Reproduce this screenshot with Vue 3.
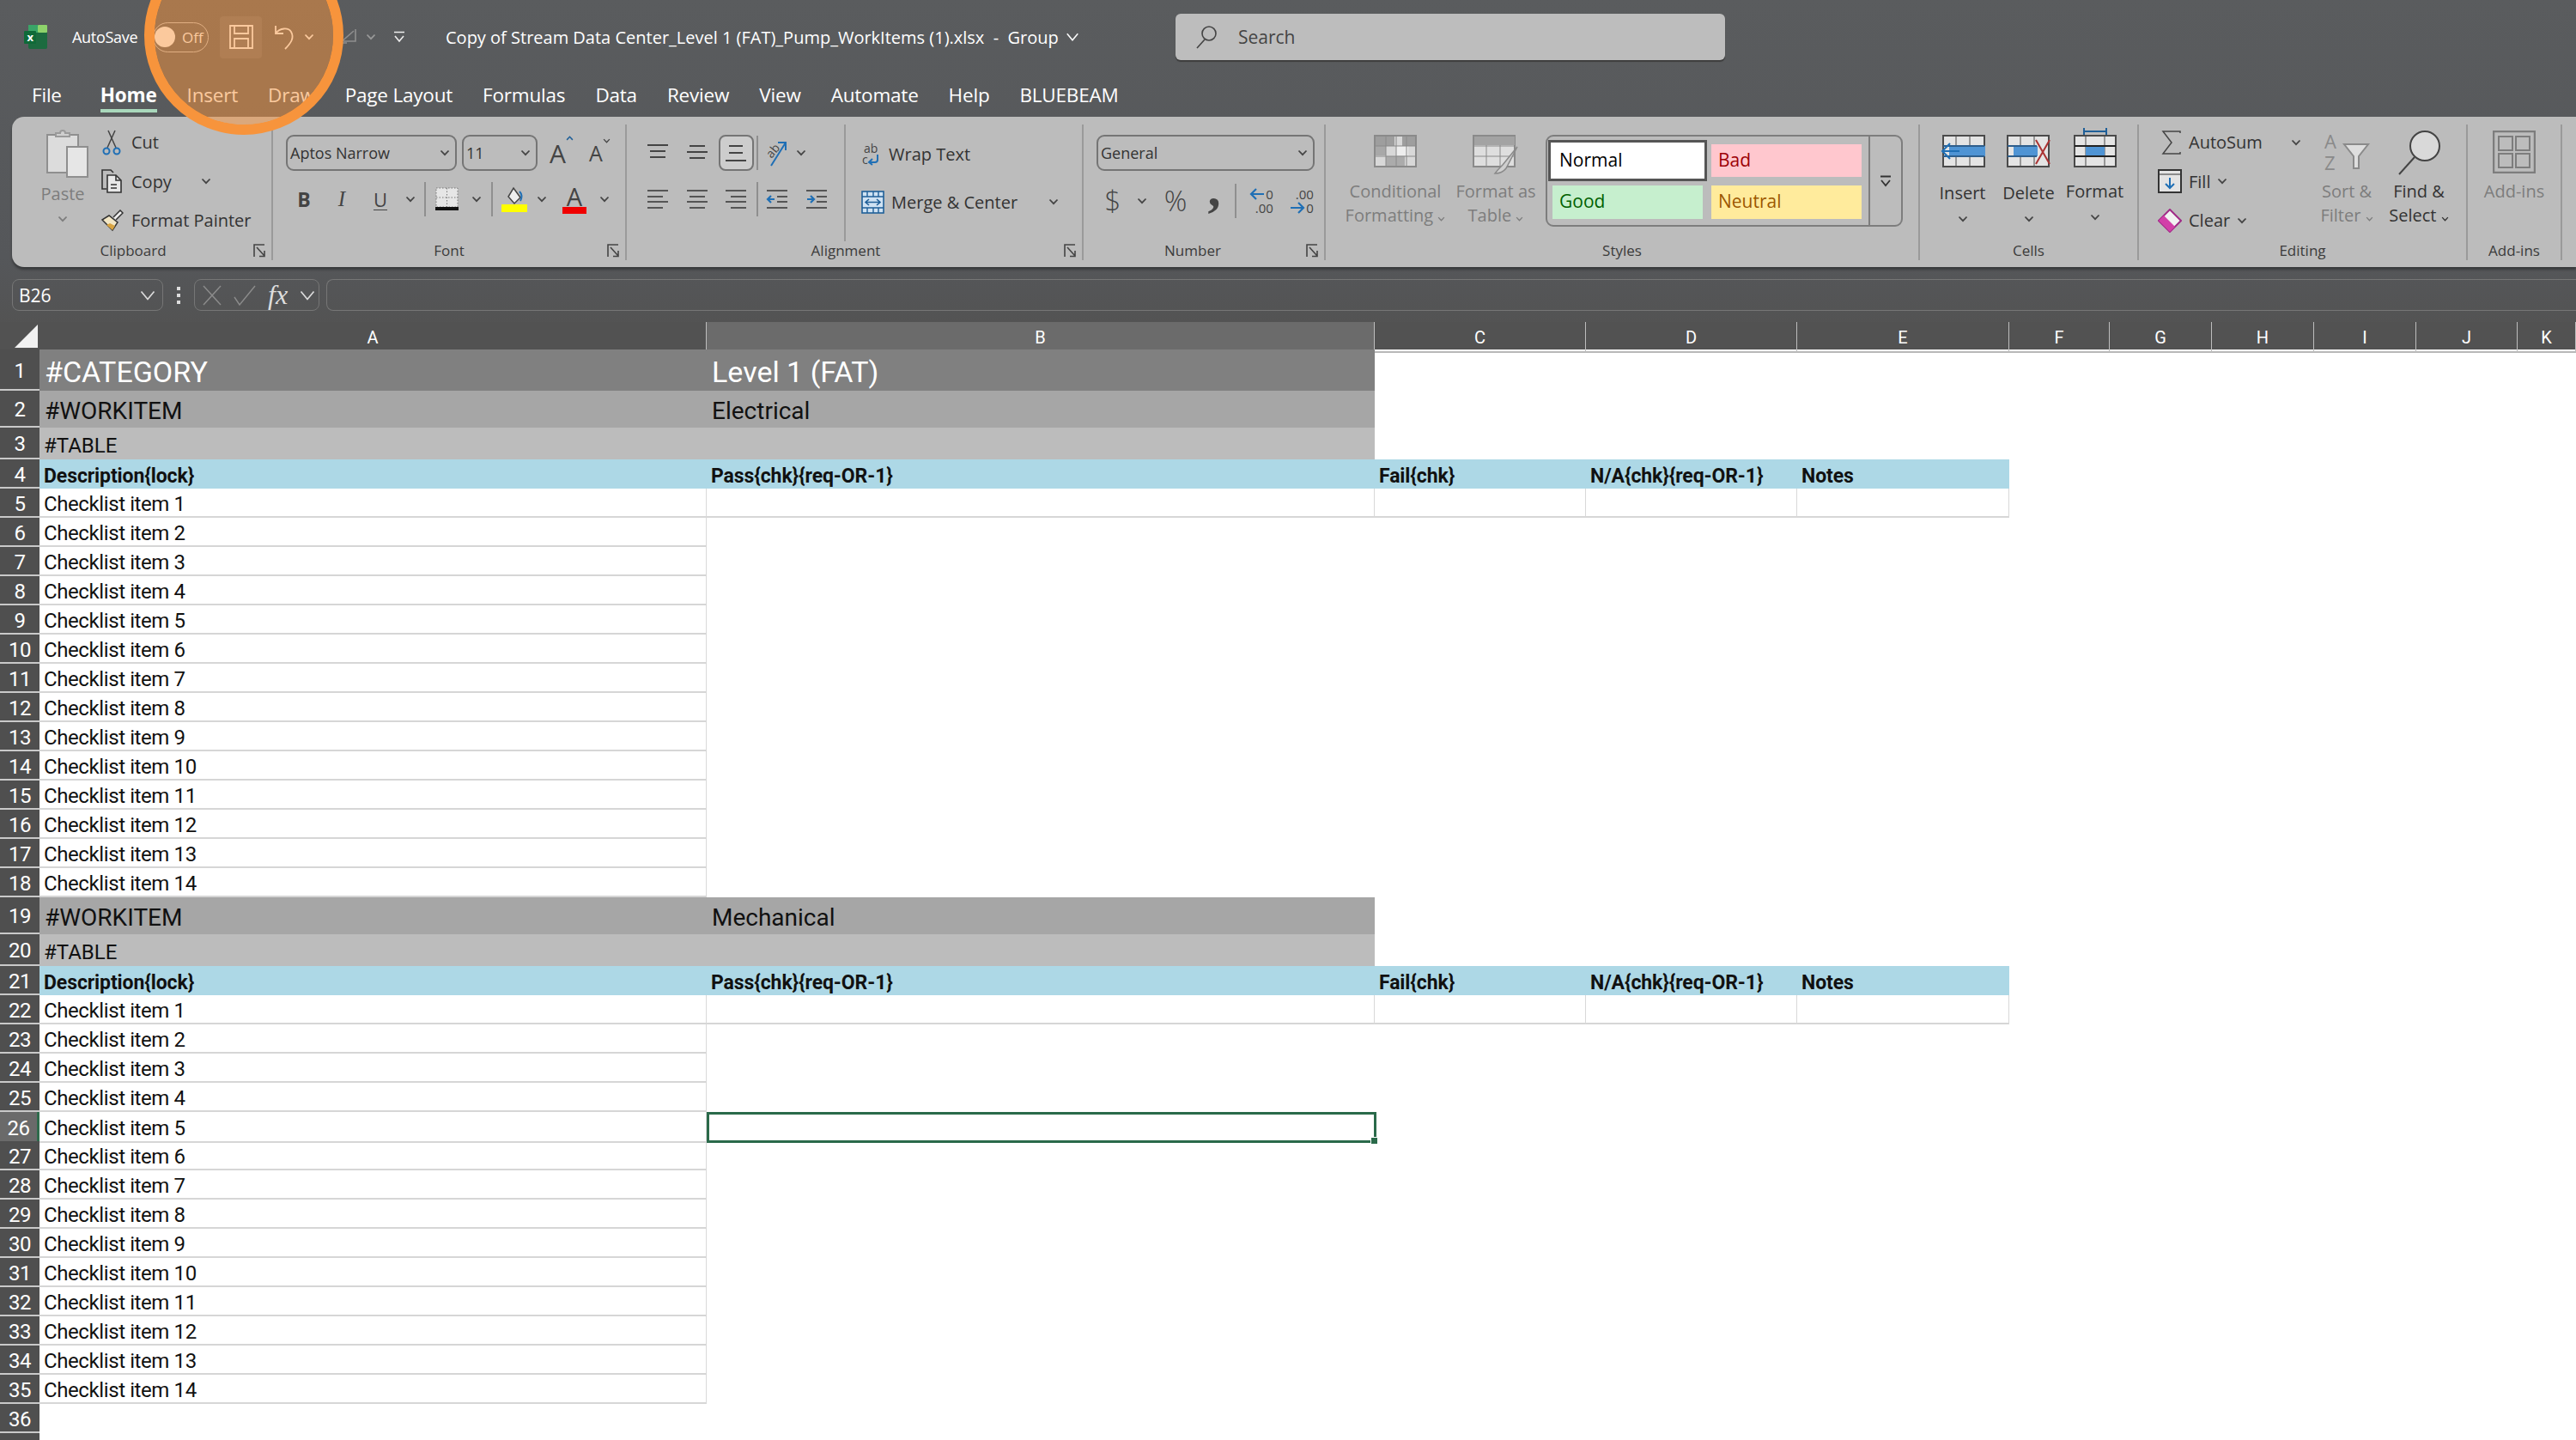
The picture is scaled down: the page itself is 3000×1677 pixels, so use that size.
<script setup>
const tabs = ['File', 'Home', 'Insert', 'Draw', 'Page Layout', 'Formulas', 'Data', 'Review', 'View', 'Automate', 'Help', 'BLUEBEAM']
const letters = ['A', 'B', 'C', 'D', 'E', 'F', 'G', 'H', 'I', 'J', 'K']
const headCells = ['Description{lock}', 'Pass{chk}{req-OR-1}', 'Fail{chk}', 'N/A{chk}{req-OR-1}', 'Notes']

function band(n, kind, a, b) {
  return { n, kind, cells: [{ text: a, cls: 'fill' }, { text: b, cls: 'fill' }] }
}

function head(n) {
  return { n, kind: 'head', cells: headCells.map((text) => ({ text, cls: 'fill' })) }
}

function items(start) {
  const out = []
  for (let i = 0; i < 14; i++) {
    const cells = [{ text: `Checklist item ${i + 1}`, cls: 'lined' }]
    if (i === 0) {
      for (let c = 0; c < 4; c++) cells.push({ text: '', cls: 'lined' })
    }
    if (start + i === 26) cells.push({ text: '', cls: 'sel' })
    out.push({ n: start + i, kind: 'line', cells })
  }
  return out
}

const rows = [
  band(1, 'cat', '#CATEGORY', 'Level 1 (FAT)'),
  band(2, 'item', '#WORKITEM', 'Electrical'),
  band(3, 'table', '#TABLE', ''),
  head(4),
  ...items(5),
  band(19, 'item', '#WORKITEM', 'Mechanical'),
  band(20, 'table', '#TABLE', ''),
  head(21),
  ...items(22),
  { n: 36, kind: 'line', cells: [] },
]
</script>

<template>
  <div class="app">
    <svg class="defs" width="0" height="0">
      <symbol id="chev" viewBox="0 0 12 8"><path d="M1.5 1.5 6 6.2l4.5-4.7" fill="none" stroke="currentColor" stroke-width="1.8" /></symbol>
      <symbol id="launch" viewBox="0 0 14 16"><path d="M1 15V1h12M4 4l9 10M13 8v6.500H7" fill="none" stroke="#444" stroke-width="1.600" /></symbol>
    </svg>

    <div class="titlebar">
      <svg class="xl" viewBox="0 0 27 28">
        <rect x="5" width="22" height="28" rx="2" fill="#1c6b3f" />
        <rect x="16" width="11" height="9" rx="1" fill="#8ed36b" />
        <rect x="5" width="11" height="9" fill="#3aa568" />
        <rect y="7" width="14" height="15" rx="1" fill="#0f6a38" />
        <text x="3.500" y="19" class="xl-x">x</text>
      </svg>
      <span class="autosave">AutoSave</span>
      <div class="toggle"><i></i><span>Off</span></div>
      <div class="savebtn">
        <svg width="28" height="28" viewBox="0 0 28 28" fill="none" stroke="#fff" stroke-width="1.800"><path d="M1 1h26v26H1zM6 1v9h16V1M6 27V16h16v11" /></svg>
      </div>
      <svg class="undo" width="27" height="30" viewBox="0 0 27 30" fill="none" stroke="#fff" stroke-width="1.800"><path d="M3 2v9h9M3 11c5-7 15-7 18-2 4 7 0 13-7 20" /></svg>
      <svg class="tchev" width="12" height="8"><use href="#chev" /></svg>
      <svg class="redo" width="24" height="22" viewBox="0 0 24 22" fill="none" stroke="#8f8f8f" stroke-width="1.600"><path d="M2 18 18 4M20 2v14H6M2 18h8" /></svg>
      <svg class="tchev dim" width="12" height="8"><use href="#chev" /></svg>
      <svg class="custom" width="14" height="14" viewBox="0 0 14 14" fill="none" stroke="#eee" stroke-width="1.600"><path d="M1 1.500h12M2 6l5 6 5-6" /></svg>
      <span class="doc">Copy of Stream Data Center_Level 1 (FAT)_Pump_WorkItems (1).xlsx&nbsp; -&nbsp; Group</span>
      <svg class="docchev" width="16" height="10" viewBox="0 0 12 8"><path d="M1 1 6 7l5-6" fill="none" stroke="#fff" stroke-width="1.200" /></svg>
      <div class="search">
        <svg width="26" height="28" viewBox="0 0 26 28" fill="none" stroke="#444" stroke-width="1.600"><circle cx="16" cy="10" r="8" /><path d="M11 17 2 27" /></svg>
        <span>Search</span>
      </div>
    </div>

    <div class="tabs">
      <span v-for="t in tabs" :key="t" class="tab" :class="{ on: t === 'Home', first: t === 'File' }">{{ t }}</span>
    </div>

    <div class="ribbon">
      <!-- Clipboard -->
      <section class="grp clip">
        <div class="body">
          <div class="pastecol">
            <svg width="50" height="58" viewBox="0 0 50 58">
              <rect x="2" y="8" width="36" height="44" fill="#dcdcdc" stroke="#8f8f8f" stroke-width="2" />
              <path d="M12 10V6h5a3 3 0 0 1 6 0h5v4z" fill="#cfcfcf" stroke="#9a9a9a" stroke-width="2" />
              <rect x="25" y="22" width="24" height="35" fill="#e6e6e6" stroke="#8f8f8f" stroke-width="2" />
            </svg>
            <span class="off pastetxt">Paste</span>
            <svg class="off pastechev" width="12" height="8"><use href="#chev" /></svg>
          </div>
          <div class="stack clipstack">
            <div class="sb">
              <svg width="24" height="30" viewBox="0 0 24 30" fill="none"><path d="M8 1l9 20M16 1 7 21" stroke="#444" stroke-width="1.500" /><circle cx="6" cy="25" r="3.500" stroke="#1f6fb5" stroke-width="2" /><circle cx="18" cy="25" r="3.500" stroke="#1f6fb5" stroke-width="2" /></svg>
              <span>Cut</span>
            </div>
            <div class="sb">
              <svg width="24" height="28" viewBox="0 0 24 28" fill="none" stroke="#333" stroke-width="1.600"><path d="M6 23H1V1h10l3 3" /><path d="M7 7h10l6 6v14H7z" fill="#e8e8e8" /><path d="M17 7v6h6M11 18h7M11 22h7" /></svg>
              <span>Copy</span>
              <svg class="chev copychev" width="12" height="8"><use href="#chev" /></svg>
            </div>
            <div class="sb">
              <svg width="26" height="26" viewBox="0 0 26 26"><path d="M1 12 9 7l10 8-6 9z" fill="#f2e6c4" stroke="#333" stroke-width="1.500" /><path d="M6 18l7 6 3-5-6-3z" fill="#d9a441" /><path d="m14 9 8-8 3 3-8 8" fill="#eee" stroke="#333" stroke-width="1.500" /></svg>
              <span>Format Painter</span>
            </div>
          </div>
        </div>
        <div class="glabel">Clipboard<svg class="launch" width="14" height="16"><use href="#launch" /></svg></div>
      </section>

      <!-- Font -->
      <section class="grp font">
        <div class="body col">
          <div class="r1">
            <div class="combo fname"><span>Aptos Narrow</span><svg class="chev" width="12" height="8"><use href="#chev" /></svg></div>
            <div class="combo fsize"><span>11</span><svg class="chev" width="12" height="8"><use href="#chev" /></svg></div>
            <span class="aa big">A<svg width="9" height="6" viewBox="0 0 12 8"><path d="M1.500 6.500 6 1.800l4.500 4.700" fill="none" stroke="#1f5f98" stroke-width="2" /></svg></span>
            <span class="aa small">A<svg width="9" height="6"><use href="#chev" /></svg></span>
          </div>
          <div class="r2 fontgrid">
            <b class="gl bold">B</b>
            <i class="gl ital">I</i>
            <span class="gl und">U</span>
            <svg class="chev" width="12" height="8"><use href="#chev" /></svg>
            <i class="vbar"></i>
            <svg width="27" height="28" viewBox="0 0 27 28"><rect x="1" y="1" width="25" height="22" fill="#e6e6e6" /><path d="M1 1h25v22H1zM13.500 1v22M1 12h25" fill="none" stroke="#777" stroke-dasharray="1.500 2" /><rect y="23" width="27" height="4" fill="#111" /></svg>
            <svg class="chev" width="12" height="8"><use href="#chev" /></svg>
            <i class="vbar"></i>
            <svg width="30" height="30" viewBox="0 0 30 30"><path d="m14 2 8 11-7 7-7-8z" fill="#eee" stroke="#444" stroke-width="1.500" /><path d="M21 6c3 3 3 7 1 11" fill="none" stroke="#1f6fb5" stroke-width="2" /><rect y="21" width="30" height="9" fill="#ffff00" /></svg>
            <svg class="chev" width="12" height="8"><use href="#chev" /></svg>
            <div class="fcolor"><span>A</span><i></i></div>
            <svg class="chev" width="12" height="8"><use href="#chev" /></svg>
          </div>
        </div>
        <div class="glabel">Font<svg class="launch" width="14" height="16"><use href="#launch" /></svg></div>
      </section>

      <!-- Alignment -->
      <section class="grp align">
        <div class="body">
          <div class="alignleft">
            <div class="aligngrid">
              <svg width="26" height="22" viewBox="0 0 26 22" stroke="#444" stroke-width="2"><path d="M1 2h24M4 9h18M4 16h18" /></svg>
              <svg width="26" height="22" viewBox="0 0 26 22" stroke="#444" stroke-width="2"><path d="M4 3h18M1 10h24M4 17h18" /></svg>
              <div class="selbtn"><svg width="26" height="24" viewBox="0 0 26 24" stroke="#444" stroke-width="2"><path d="M5 4h16M5 12h16M1 21h24" /></svg></div>
              <i class="vbar"></i>
              <span class="orient">
                <svg class="open" width="32" height="34" viewBox="0 0 32 34"><text x="3" y="20" class="ab" transform="rotate(-50 10 16)">ab</text><path d="M8 32 25 5M16 5h9v9" fill="none" stroke="#1f6fb5" stroke-width="2" /></svg>
                <svg class="chev" width="12" height="8"><use href="#chev" /></svg>
              </span>
            </div>
            <div class="aligngrid low">
              <svg width="26" height="24" viewBox="0 0 26 24" stroke="#555" stroke-width="1.800"><path d="M1 2h24M1 9h18M1 15h24M1 22h18" /></svg>
              <svg width="26" height="24" viewBox="0 0 26 24" stroke="#555" stroke-width="1.800"><path d="M1 2h24M4 9h18M1 15h24M4 22h18" /></svg>
              <svg width="26" height="24" viewBox="0 0 26 24" stroke="#555" stroke-width="1.800"><path d="M1 2h24M7 9h18M1 15h24M7 22h18" /></svg>
              <i class="vbar"></i>
              <span class="indents">
                <svg width="26" height="24" viewBox="0 0 26 24"><path d="M1 2h24M13 9h12M13 15h12M1 22h24" stroke="#555" stroke-width="1.800" /><path d="M10 12H2m4-4-4 4 4 4" fill="none" stroke="#1f6fb5" stroke-width="2.200" /></svg>
                <svg width="26" height="24" viewBox="0 0 26 24"><path d="M1 2h24M13 9h12M13 15h12M1 22h24" stroke="#555" stroke-width="1.800" /><path d="M2 12h8m-4-4 4 4-4 4" fill="none" stroke="#1f6fb5" stroke-width="2.200" /></svg>
              </span>
            </div>
          </div>
          <div class="stack wraps">
            <div class="sb">
              <svg class="open" width="24" height="26" viewBox="0 0 24 26"><text x="3" y="11" class="ab">ab</text><text x="1" y="24" class="ab">c</text><path d="M19 13v6a3 3 0 0 1-3 3H9m4-4-4 4 4 3" fill="none" stroke="#1f6fb5" stroke-width="2" /></svg>
              <span>Wrap Text</span>
            </div>
            <div class="sb merge">
              <svg width="27" height="27" viewBox="0 0 27 27"><rect x="1" y="1" width="25" height="25" fill="#cfe2f3" stroke="#1f5f98" stroke-width="1.600" /><path d="M1 7h25M1 20h25M7 1v6M14 1v6M20 1v6M7 20v6M14 20v6M20 20v6" stroke="#1f5f98" stroke-width="1.400" /><path d="M5 13.500h17M9 10l-4 3.500L9 17M18 10l4 3.500-4 3.500" fill="none" stroke="#1f5f98" stroke-width="1.600" /></svg>
              <span>Merge &amp; Center</span>
              <svg class="chev mergechev" width="12" height="8"><use href="#chev" /></svg>
            </div>
          </div>
        </div>
        <div class="glabel">Alignment<svg class="launch" width="14" height="16"><use href="#launch" /></svg></div>
      </section>

      <!-- Number -->
      <section class="grp number">
        <div class="body col">
          <div class="r1"><div class="combo fnum"><span>General</span><svg class="chev" width="12" height="8"><use href="#chev" /></svg></div></div>
          <div class="r2 numgrid">
            <span class="gl sym dollar">$</span>
            <svg class="chev" width="12" height="8"><use href="#chev" /></svg>
            <span class="gl sym">%</span>
            <b class="gl comma">,</b>
            <i class="vbar"></i>
            <span class="decs">
              <span class="decline"><svg width="18" height="14" viewBox="0 0 18 14" fill="none" stroke="#1f6fb5" stroke-width="2.200"><path d="M17 7H2m6-6-6 6 6 6" /></svg>0</span>
              <span>.00</span>
            </span>
            <span class="decs">
              <span>.00</span>
              <span class="decline"><svg width="18" height="14" viewBox="0 0 18 14" fill="none" stroke="#1f6fb5" stroke-width="2.200"><path d="M1 7h15m-6-6 6 6-6 6" /></svg>0</span>
            </span>
          </div>
        </div>
        <div class="glabel">Number<svg class="launch" width="14" height="16"><use href="#launch" /></svg></div>
      </section>

      <!-- Styles -->
      <section class="grp styles">
        <div class="body">
          <div class="bigbtn off sw118">
            <div class="bigicon">
              <svg width="50" height="38" viewBox="0 0 50 38"><rect x="1" y="1" width="48" height="36" fill="#d8d8d8" stroke="#8a8a8a" stroke-width="2" /><rect x="2" y="2" width="22" height="11" fill="#9e9e9e" /><rect x="33" y="2" width="15" height="11" fill="#9e9e9e" /><rect x="2" y="13" width="12" height="11" fill="#a8a8a8" /><rect x="26" y="13" width="14" height="11" fill="#eee" /><rect x="14" y="25" width="22" height="11" fill="#ababab" /><path d="M14 1v36M26 1v36M38 1v36M1 13h48M1 25h48" stroke="#8a8a8a" /></svg>
            </div>
            <span>Conditional</span>
            <span>Formatting <svg width="9" height="6"><use href="#chev" /></svg></span>
          </div>
          <div class="bigbtn off sw116">
            <div class="bigicon">
              <svg width="54" height="46" viewBox="0 0 54 46"><rect x="1" y="1" width="48" height="36" fill="#dedede" stroke="#8a8a8a" stroke-width="2" /><path d="M16 1v36M32 1v36M1 13h48M1 25h48" stroke="#8a8a8a" /><rect x="2" y="2" width="47" height="10" fill="#a3a3a3" /><path d="M52 14 35 35c-3 3-6 6-9 10 5 0 10-2 13-6l13-25z" fill="#cfcfcf" stroke="#8a8a8a" stroke-width="1.500" /></svg>
            </div>
            <span>Format as</span>
            <span>Table <svg width="9" height="6"><use href="#chev" /></svg></span>
          </div>
          <div class="gallery">
            <div class="cellstyles">
              <div class="cs normal">Normal</div>
              <div class="cs bad">Bad</div>
              <div class="cs good">Good</div>
              <div class="cs neutral">Neutral</div>
            </div>
            <div class="more">
              <svg width="14" height="14" viewBox="0 0 14 14" fill="none" stroke="#333" stroke-width="1.800"><path d="M1 1.500h12M2 6l5 6 5-6" /></svg>
            </div>
          </div>
        </div>
        <div class="glabel">Styles</div>
      </section>

      <!-- Cells -->
      <section class="grp cells">
        <div class="body">
          <div class="bigbtn cw">
            <div class="bigicon">
              <svg width="52" height="38" viewBox="0 0 52 38"><rect x="3" y="1" width="48" height="36" fill="#e4e4e4" stroke="#4a4a4a" stroke-width="2" /><path d="M18 1v36M34 1v36" stroke="#4a4a4a" /><rect x="10" y="13" width="42" height="12" fill="#4f94d4" /><path d="M3 13h48M3 25h48" stroke="#2e5e8c" stroke-width="2" /><path d="M22 19H2m9-9-9 9 9 9" fill="none" stroke="#1f6fb5" stroke-width="2" /></svg>
            </div>
            <span>Insert</span>
            <svg class="chev" width="12" height="8"><use href="#chev" /></svg>
          </div>
          <div class="bigbtn cw">
            <div class="bigicon">
              <svg width="52" height="38" viewBox="0 0 52 38"><rect x="1" y="1" width="48" height="36" fill="#e4e4e4" stroke="#4a4a4a" stroke-width="2" /><path d="M16 1v36M32 1v36" stroke="#4a4a4a" /><rect x="8" y="13" width="28" height="12" fill="#4f94d4" /><path d="M1 13h34M1 25h34" stroke="#2e5e8c" stroke-width="2" /><path d="m34 6 16 28M50 6 34 34" stroke="#a33" stroke-width="2" /></svg>
            </div>
            <span>Delete</span>
            <svg class="chev" width="12" height="8"><use href="#chev" /></svg>
          </div>
          <div class="bigbtn cw fmtbtn">
            <div class="bigicon">
              <svg width="50" height="46" viewBox="0 0 50 46"><path d="M12 4h26M12 0v8M38 0v8" stroke="#1f5f98" stroke-width="2" /><rect x="1" y="9" width="48" height="36" fill="#e4e4e4" stroke="#4a4a4a" stroke-width="2" /><path d="M14 9v36M36 9v36" stroke="#4a4a4a" /><rect x="14" y="21" width="22" height="12" fill="#4f94d4" /><path d="M1 21h48M1 33h48" stroke="#222" stroke-width="2" /></svg>
            </div>
            <span>Format</span>
            <svg class="chev" width="12" height="8"><use href="#chev" /></svg>
          </div>
        </div>
        <div class="glabel">Cells</div>
      </section>

      <!-- Editing -->
      <section class="grp editing">
        <div class="body">
          <div class="stack edstack">
            <div class="sb">
              <svg class="sigma" width="24" height="28" viewBox="0 0 24 28" fill="none" stroke="#444" stroke-width="1.500"><path d="M22 3V1H2l10 13L2 27h20v-2" /></svg>
              <span>AutoSum</span>
              <svg class="chev sumchev" width="12" height="8"><use href="#chev" /></svg>
            </div>
            <div class="sb">
              <svg width="28" height="28" viewBox="0 0 28 28" fill="none"><rect x="1" y="1" width="26" height="26" fill="#e4e4e4" stroke="#333" stroke-width="2" /><path d="M1 6h26" stroke="#333" /><path d="M14 10v12m-5-5 5 5 5-5" stroke="#1f6fb5" stroke-width="2" /></svg>
              <span>Fill</span>
              <svg class="chev" width="12" height="8"><use href="#chev" /></svg>
            </div>
            <div class="sb">
              <svg width="28" height="28" viewBox="0 0 28 28"><path d="m14 1 13 13-13 13L1 14z" fill="#f2f2f2" stroke="#a02b87" stroke-width="2" /><path d="M1 14 14 27l6-6L7 8z" fill="#d23fa8" /></svg>
              <span>Clear</span>
              <svg class="chev" width="12" height="8"><use href="#chev" /></svg>
            </div>
          </div>
          <div class="bigbtn off ew">
            <div class="bigicon">
              <svg class="open" width="54" height="50" viewBox="0 0 54 50"><text x="1" y="21" class="az">A</text><text x="1" y="46" class="az">Z</text><path d="M24 16h28L41 30v14h-6V30z" fill="#dedede" stroke="#8a8a8a" stroke-width="2" /></svg>
            </div>
            <span>Sort &amp;</span>
            <span>Filter <svg width="9" height="6"><use href="#chev" /></svg></span>
          </div>
          <div class="bigbtn ew">
            <div class="bigicon">
              <svg width="52" height="52" viewBox="0 0 52 52" fill="none" stroke="#444" stroke-width="2"><ellipse cx="33" cy="18" rx="17" ry="17" fill="#d9d9d9" /><path d="M21 31 3 51" /></svg>
            </div>
            <span>Find &amp;</span>
            <span>Select <svg width="9" height="6"><use href="#chev" /></svg></span>
          </div>
        </div>
        <div class="glabel">Editing</div>
      </section>

      <!-- Add-ins -->
      <section class="grp addins">
        <div class="body">
          <div class="bigbtn off aw">
            <div class="bigicon">
              <svg width="50" height="50" viewBox="0 0 50 50" fill="none" stroke="#7d7d7d" stroke-width="2"><rect x="1" y="1" width="48" height="48" stroke-width="2.500" /><rect x="7" y="7" width="16" height="16" /><rect x="27" y="7" width="16" height="16" /><rect x="7" y="27" width="16" height="16" /><rect x="27" y="27" width="16" height="16" /></svg>
            </div>
            <span>Add-ins</span>
          </div>
        </div>
        <div class="glabel">Add-ins</div>
      </section>
    </div>

    <div class="fbar">
      <div class="namebox"><span>B26</span><svg width="18" height="12" viewBox="0 0 12 8"><path d="M1 1 6 7l5-6" fill="none" stroke="#ddd" stroke-width="1.100" /></svg></div>
      <div class="dots"><i></i><i></i><i></i></div>
      <div class="fbtns">
        <svg width="22" height="24" viewBox="0 0 22 24" stroke="#8c8c8c" stroke-width="1.400"><path d="m1 1 20 22M21 1 1 23" /></svg>
        <svg width="26" height="24" viewBox="0 0 26 24" fill="none" stroke="#8c8c8c" stroke-width="1.400"><path d="m1 14 6 9L25 1" /></svg>
        <span class="fx">fx</span>
        <svg width="18" height="12" viewBox="0 0 12 8"><path d="M1 1 6 7l5-6" fill="none" stroke="#ddd" stroke-width="1.100" /></svg>
      </div>
      <div class="finput"></div>
    </div>

    <div class="sheet">
      <div class="gridrow colhead">
        <div class="corner"><svg width="28" height="27" viewBox="0 0 28 27"><path d="M27 0v27H0z" fill="#f2f2f2" /></svg></div>
        <div v-for="l in letters" :key="l" class="ch" :class="{ hot: l === 'B' }">{{ l }}</div>
      </div>
      <div v-for="row in rows" :key="row.n" class="gridrow" :class="row.kind">
        <div class="rh" :class="{ hot: row.n === 26 }">{{ row.n }}</div>
        <div v-for="(c, i) in row.cells" :key="i" class="cell" :class="c.cls">
          {{ c.text }}<i v-if="c.cls === 'sel'" class="handle"></i>
        </div>
      </div>
      <div class="gridrow line"><div class="rh"></div></div>
    </div>

    <div class="highlight"></div>
  </div>
</template>

<style>
body {
  background: #fff;
}
</style>

<style scoped>
.app {
  position: relative;
  width: 3000px;
  height: 1677px;
  overflow: hidden;
  background: linear-gradient(#5a5c5e, #55575a 300px, #535353 380px);
  font-family: "Open Sans", "Noto Sans", sans-serif;
  color: #333;
}

.defs {
  position: absolute;
}

.open {
  overflow: visible;
}

/* title bar */
.titlebar {
  height: 86px;
  display: flex;
  align-items: center;
  color: #fff;
}

.xl {
  width: 27px;
  height: 28px;
  margin-left: 28px;
}

.xl-x {
  font: bold 13px "Open Sans", sans-serif;
  fill: #fff;
}

.autosave {
  margin-left: 29px;
  font-size: 18px;
  letter-spacing: -0.3px;
  width: 94px;
}

.toggle {
  width: 65px;
  height: 35px;
  border: 1.500px solid #c9c9c9;
  border-radius: 18px;
  display: flex;
  align-items: center;
  gap: 8px;
  box-sizing: border-box;
  font-size: 17px;
  padding-left: 1px;
}

.toggle i {
  width: 24px;
  height: 24px;
  border-radius: 50%;
  background: #fff;
}

.savebtn {
  margin-left: 13px;
  width: 49px;
  height: 49px;
  background: rgba(255, 255, 255, 0.09);
  border-radius: 4px;
  display: flex;
  align-items: center;
  justify-content: center;
}

.undo {
  margin-left: 13px;
}

.tchev {
  margin-left: 9px;
}

.tchev.dim {
  color: #999;
  margin-left: 8px;
}

.redo {
  margin-left: 28px;
}

.custom {
  margin-left: 20px;
}

.doc {
  margin-left: 47px;
  font-size: 20px;
  white-space: pre;
}

.docchev {
  margin-left: 8px;
}

.search {
  position: absolute;
  left: 1369px;
  top: 16px;
  width: 640px;
  height: 54px;
  box-sizing: border-box;
  background: #bdbdbd;
  border-radius: 6px;
  box-shadow: 0 2px 1px #3d3d3d;
  display: flex;
  align-items: center;
  gap: 24px;
  padding-left: 23px;
  color: #444;
  font-size: 21px;
}

/* tabs */
.tabs {
  height: 50px;
  display: flex;
  gap: 35px;
  padding-left: 37px;
  color: #fff;
  font-size: 22.500px;
  line-height: 50px;
}

.tab {
  position: relative;
  letter-spacing: -0.2px;
}

.tab.first {
  margin-right: 10px;
}

.tab.on {
  font-weight: 700;
}

.tab.on::after {
  content: "";
  position: absolute;
  left: 0;
  right: 0;
  bottom: 5px;
  height: 4px;
  background: #a9d7bb;
}

/* ribbon */
.ribbon {
  margin-left: 14px;
  height: 175px;
  display: flex;
  background: #bcbcbc;
  border-radius: 14px 0 0 14px;
  box-shadow: 0 3px 3px rgba(0, 0, 0, 0.35);
}

.grp {
  display: flex;
  flex-direction: column;
  box-sizing: border-box;
  height: 158px;
  margin-top: 9px;
  border-right: 2px solid #9a9a9a;
  font-size: 20px;
  flex: none;
}

.body {
  height: 136px;
  display: flex;
}

.body.col {
  flex-direction: column;
}

.glabel {
  position: relative;
  flex: 1;
  text-align: center;
  font-size: 17px;
  line-height: 22px;
  color: #3b3b3b;
}

.clip .glabel {
  padding-right: 20px;
}

.align .glabel {
  padding-right: 20px;
}

.number .glabel {
  padding-right: 26px;
}

.launch {
  position: absolute;
  right: 7px;
  top: 3px;
}

.chev {
  color: #444;
  display: block;
}

.off {
  color: #7d7d7d;
}

.clip { width: 304px; }
.font { width: 412px; }
.align { width: 532px; }
.number { width: 282px; }
.styles { width: 692px; }
.cells { width: 255px; }
.editing { width: 383px; }
.addins { width: 110px; }

.pastecol {
  width: 58px;
  margin-left: 35px;
  padding-top: 4px;
  display: flex;
  flex-direction: column;
  align-items: center;
}

.pastetxt {
  margin: 6px 10px 0 0;
  line-height: 26px;
}

.pastechev {
  margin: 12px 10px 0 0;
  width: 12px;
  height: 8px;
}

.stack {
  margin-left: 11px;
  display: flex;
  flex-direction: column;
}

.sb {
  height: 45.500px;
  display: flex;
  align-items: center;
  gap: 9px;
  white-space: nowrap;
}

.clipstack {
  margin-top: -2px;
}

.clipstack .sb {
  gap: 11px;
}

.clipstack .sb:last-child {
  gap: 9px;
}

.copychev {
  margin-left: 23px;
}

.combo {
  height: 42px;
  box-sizing: border-box;
  border: 2px solid #757575;
  border-radius: 9px;
  display: flex;
  align-items: center;
  justify-content: space-between;
  padding: 0 6px 0 3px;
  font-size: 18px;
  color: #333;
}

.r1 {
  display: flex;
  align-items: center;
  margin: 12px 0 0 15px;
}

.r2 {
  margin: 12px 0 0 15px;
  height: 42px;
  display: grid;
  align-items: center;
  justify-items: center;
}

.fname { width: 199px; }
.fsize { width: 88px; margin-left: 6px; }
.fnum { width: 254px; }

.aa {
  display: flex;
  align-items: flex-start;
  color: #444;
}

.aa.big {
  font-size: 30px;
  margin-left: 14px;
}

.aa.small {
  font-size: 25px;
  margin-left: 18px;
}

.fontgrid {
  grid-template-columns: 42px 46px 44px 25px 10px 41px 27px 10px 41px 24px 52px 17px;
}

.gl {
  font-style: normal;
  color: #444;
  font-size: 22px;
}

.bold {
  font-size: 23px;
  font-weight: 700;
}

.ital {
  font-family: "Liberation Serif", serif;
  font-style: italic;
  font-size: 25px;
}

.und {
  text-decoration: underline;
  text-underline-offset: 3px;
  text-decoration-thickness: 1px;
}

.vbar {
  width: 2px;
  height: 40px;
  background: #8f8f8f;
}

.fcolor {
  width: 30px;
  display: flex;
  flex-direction: column;
  align-items: center;
  font-size: 29px;
  line-height: 25px;
  color: #444;
}

.fcolor i {
  width: 28px;
  height: 8px;
  background: #f00000;
}

.alignleft {
  width: 242px;
  margin-left: 13px;
  border-right: 2px solid #9a9a9a;
  box-sizing: border-box;
}

.aligngrid {
  margin-top: 12px;
  height: 42px;
  display: grid;
  grid-template-columns: 46px 46px 44px 6px 58px;
  align-items: center;
  justify-items: center;
}

.selbtn {
  width: 41px;
  height: 42px;
  box-sizing: border-box;
  border: 2px solid #757575;
  border-radius: 8px;
  background: #cdcdcd;
  display: flex;
  align-items: center;
  justify-content: center;
}

.orient {
  display: flex;
  align-items: center;
  gap: 5px;
}

.indents {
  display: flex;
  gap: 20px;
  margin-left: 28px;
}

.ab {
  font: 14px "Open Sans", sans-serif;
  fill: #444;
}

.wraps {
  margin-left: 18px;
  padding-top: 12px;
  gap: 10px;
}

.wraps .sb {
  gap: 8px;
}

.mergechev {
  margin-left: 28px;
}

.numgrid {
  grid-template-columns: 38px 30px 48px 42px 8px 52px 42px;
}

.sym {
  font-size: 33px;
  font-weight: 300;
}

.comma {
  font-family: "Liberation Serif", serif;
  font-weight: 700;
  font-size: 60px;
  line-height: 20px;
  transform: translateY(-14px);
}

.decs {
  display: flex;
  flex-direction: column;
  align-items: flex-end;
  font-size: 15px;
  line-height: 16px;
  color: #444;
}

.decline {
  display: flex;
  align-items: center;
  gap: 1px;
}

.styles .body {
  padding-left: 22px;
}

.bigbtn {
  display: flex;
  flex-direction: column;
  align-items: center;
  line-height: 28px;
  white-space: nowrap;
}

.bigicon {
  height: 64px;
  padding-top: 12px;
  box-sizing: border-box;
}

.bigbtn .bigicon + span + .chev {
  margin-top: 12px;
}

.sw118 { width: 118px; }
.sw116 { width: 116px; }

.gallery {
  margin-top: 12px;
  width: 416px;
  height: 107px;
  box-sizing: border-box;
  border: 2px solid #7d7d7d;
  border-radius: 9px;
  display: flex;
}

.cellstyles {
  padding: 9px 0 0 6px;
  display: grid;
  grid-template-columns: 175px 175px;
  grid-template-rows: 38px 39px;
  gap: 10px;
}

.cs {
  font-size: 21px;
  line-height: 36px;
  padding-left: 8px;
}

.normal {
  background: #fff;
  color: #000;
  box-shadow: 0 0 0 2px #fff, 0 0 0 5px #555;
}

.bad { background: #ffc7ce; color: #9c0006; }
.good { background: #c6efce; color: #006100; }
.neutral { background: #ffeb9c; color: #9c5700; }

.more {
  margin-left: 8px;
  flex: 1;
  border-left: 2px solid #7d7d7d;
  display: flex;
  align-items: center;
  justify-content: center;
}

.cells .body {
  padding-left: 11px;
}

.cw { width: 77px; }

.cw .bigicon {
  height: 66px;
}

.fmtbtn .bigicon {
  height: 64px;
  padding-top: 4px;
}

.edstack {
  width: 178px;
  margin-left: 22px;
  margin-top: -2px;
}

.edstack .sb {
  gap: 8px;
}

.sigma {
  margin-left: 4px;
}

.sumchev {
  margin-left: 25px;
}

.ew { width: 84px; }

.ew .bigicon {
  padding-top: 7px;
}

.az {
  font: 22px "Open Sans", sans-serif;
  fill: #8a8a8a;
}

.aw {
  width: 108px;
}

.aw .bigicon {
  padding-top: 7px;
}

/* formula bar */
.fbar {
  margin-top: 14px;
  height: 37px;
  display: flex;
  align-items: stretch;
  padding-left: 14px;
}

.namebox {
  width: 176px;
  box-sizing: border-box;
  border: 1.500px solid #767676;
  border-radius: 8px;
  display: flex;
  align-items: center;
  justify-content: space-between;
  padding: 0 8px 0 7px;
  color: #fff;
  font-size: 21px;
}

.dots {
  width: 36px;
  display: flex;
  flex-direction: column;
  align-items: center;
  justify-content: center;
  gap: 4px;
}

.dots i {
  width: 4px;
  height: 4px;
  background: #ddd;
}

.fbtns {
  width: 146px;
  box-sizing: border-box;
  border: 1.500px solid #767676;
  border-radius: 8px;
  display: flex;
  align-items: center;
  gap: 14px;
  padding-left: 9px;
  color: #ddd;
}

.fx {
  font: italic 32px "Liberation Serif", serif;
}

.finput {
  margin-left: 8px;
  flex: 1;
  border: 1.500px solid #767676;
  border-right: 0;
  border-radius: 8px 0 0 8px;
}

/* sheet */
.sheet {
  margin-top: 13px;
}

.gridrow {
  display: grid;
  grid-template-columns: 46px 777px 778px 246px 246px 247px 117px 119px 119px 119px 118px 68px;
  font-family: "Roboto", sans-serif;
  background: #fff;
  color: #111;
}

.colhead {
  height: 32px;
  background: #525252;
  color: #fff;
  font-size: 20px;
}

.corner {
  box-sizing: border-box;
  padding: 3px 0 0 17px;
  border-bottom: 2px solid #b8b8b8;
}

.corner svg {
  display: block;
}

.ch {
  box-sizing: border-box;
  border-right: 1px solid #bdbdbd;
  border-bottom: 2px solid #b8b8b8;
  text-align: center;
  line-height: 30px;
  padding-top: 3px;
}

.ch.hot {
  background: #6b6b6b;
  border-bottom: 3px solid #2f6b4c;
}

.rh {
  box-sizing: border-box;
  background: #4f4f4f;
  color: #fff;
  border-bottom: 2px solid #c9c9c9;
  text-align: center;
  font-size: 24px;
  letter-spacing: -0.5px;
  display: flex;
  align-items: center;
  justify-content: center;
  padding-top: 3px;
}

.rh.hot {
  background: #6a6a6a;
  border-right: 3px solid #2f6b4c;
}

.cell {
  box-sizing: border-box;
  white-space: nowrap;
  display: flex;
  align-items: center;
  padding: 4px 0 0 5px;
  position: relative;
}

.cat { height: 48px; }
.cat .fill { background: #808080; color: #fff; font-size: 34px; padding-left: 6px; }

.item { height: 43px; }
.item .fill { background: #a6a6a6; font-size: 28px; padding-left: 6px; }

.table { height: 37px; }
.table .fill { background: #bcbcbc; font-size: 24px; }

.head { height: 34px; }
.head .fill { background: #add8e6; font-size: 23px; font-weight: 700; letter-spacing: -0.1px; }

.line { height: 34px; }

.lined {
  font-size: 24px;
  letter-spacing: -0.4px;
  border-right: 1.500px solid #d9d9d9;
  border-bottom: 2px solid #d6d6d6;
}

.sel {
  border: 3px solid #2a6a4a;
  height: 36px;
  margin-right: -2px;
  z-index: 1;
}

.handle {
  position: absolute;
  right: -5px;
  bottom: -5px;
  width: 7px;
  height: 7px;
  background: #2a6a4a;
  border: 1px solid #fff;
}

/* annotation circle over the quick access toolbar */
.highlight {
  position: absolute;
  left: 168px;
  top: -75px;
  width: 232px;
  height: 232px;
  box-sizing: border-box;
  border: 12px solid #f7943c;
  border-radius: 50%;
  background: rgba(247, 147, 59, 0.5);
  background-clip: padding-box;
}
</style>
